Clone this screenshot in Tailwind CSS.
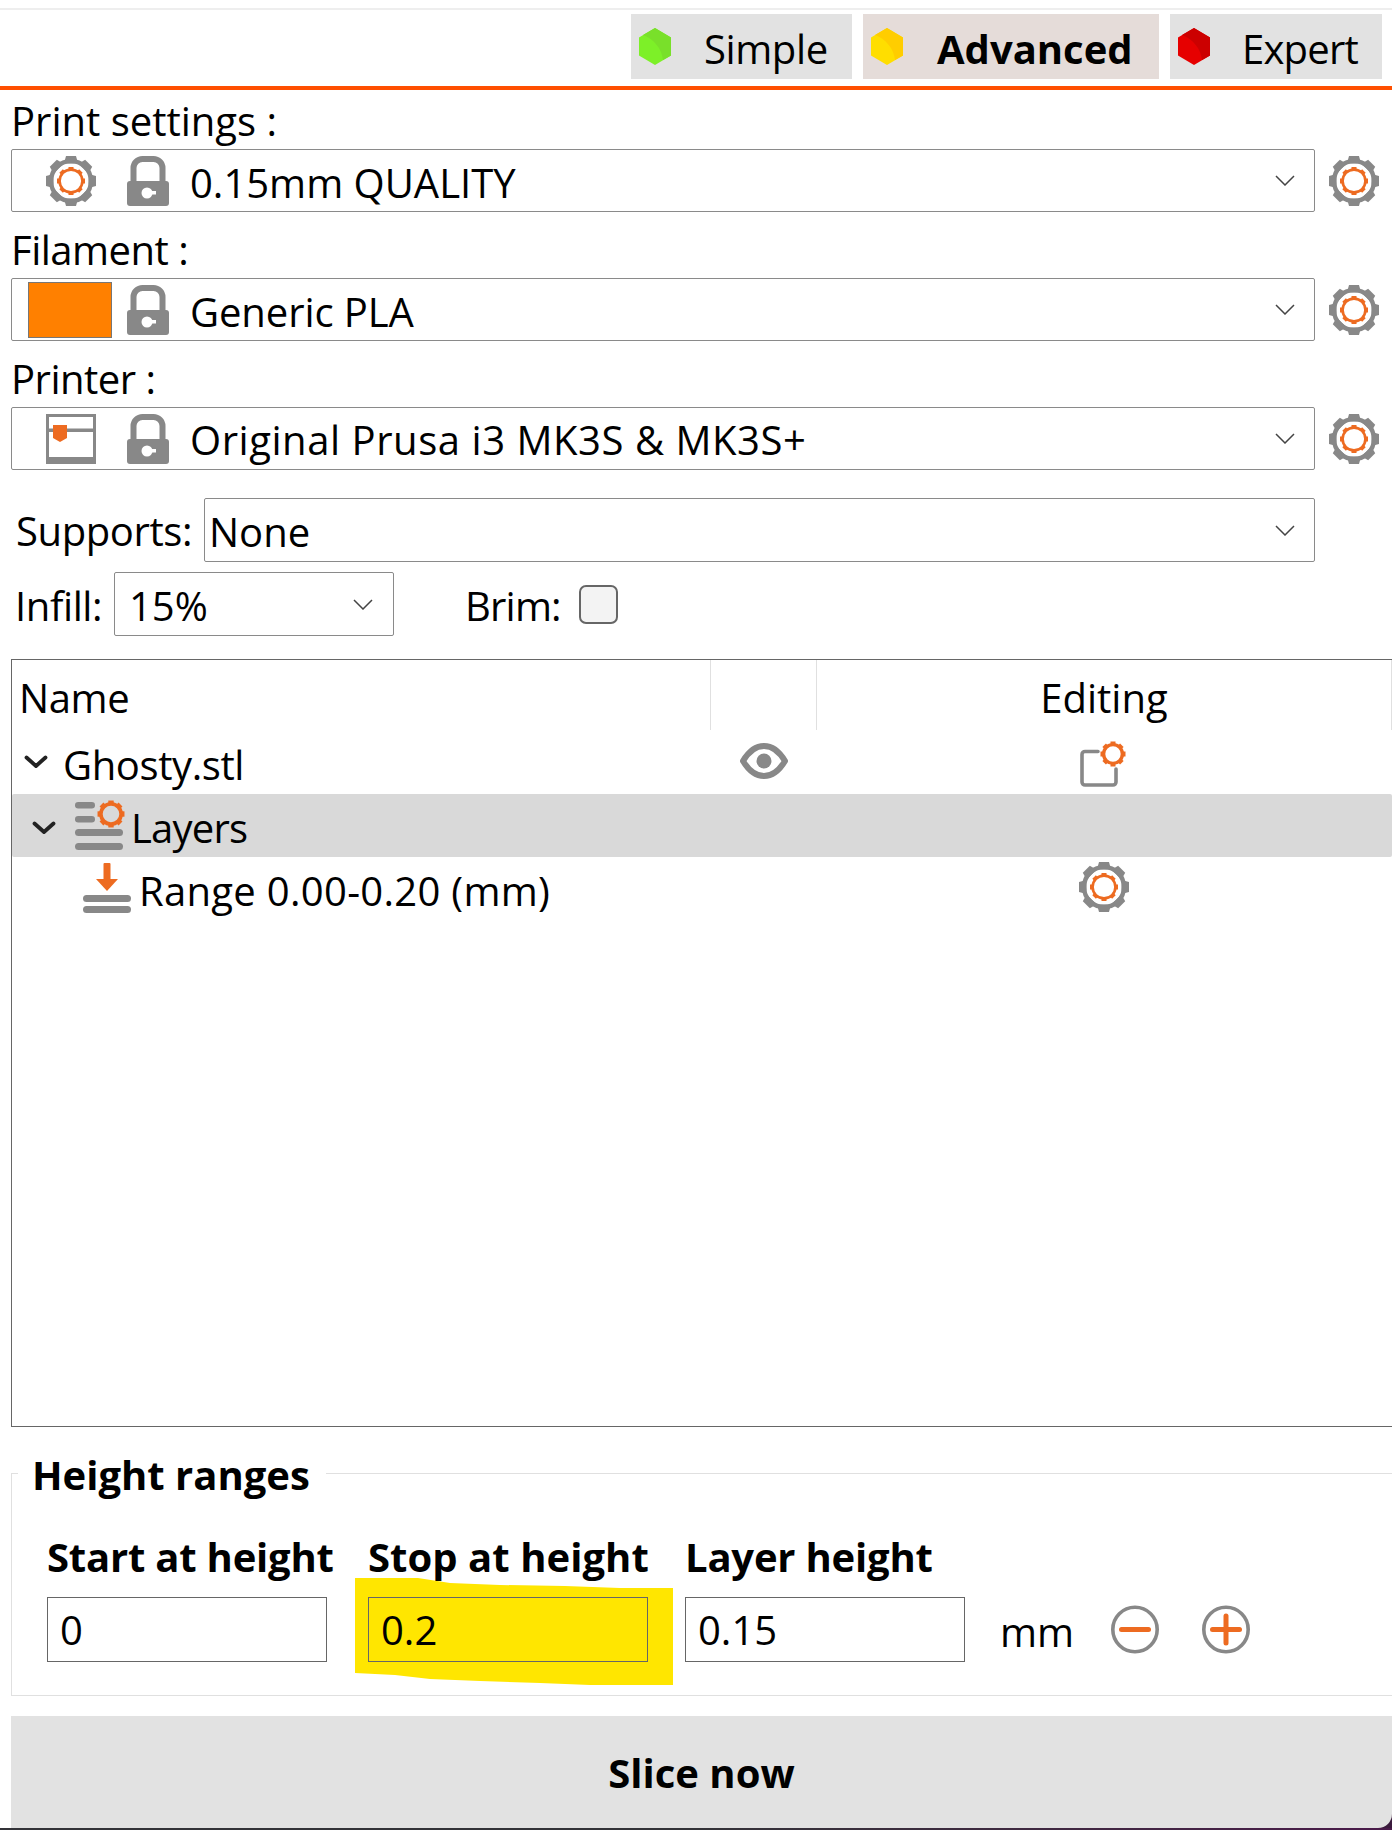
<!DOCTYPE html>
<html lang="en">
<head>
    <meta charset="UTF-8">
    <title>Height ranges</title>
    <script src="https://cdn.jsdelivr.net/npm/@tailwindcss/browser@4"></script>
</head>
<body class="bg-white">
    <!-- Shared icons -->
    <svg width="0" height="0" class="absolute">
        <defs>
            <symbol id="orange-gear" viewBox="0 0 50 50">
                <circle cx="25" cy="25" r="11.4" fill="none" stroke="#ED6B21" stroke-width="2.6"/>
                <g fill="#ED6B21">
                    <rect x="22.5" y="11" width="5" height="2.5"/>
                    <rect x="22.5" y="11" width="5" height="2.5" transform="rotate(45 25 25)"/>
                    <rect x="22.5" y="11" width="5" height="2.5" transform="rotate(90 25 25)"/>
                    <rect x="22.5" y="11" width="5" height="2.5" transform="rotate(135 25 25)"/>
                    <rect x="22.5" y="11" width="5" height="2.5" transform="rotate(180 25 25)"/>
                    <rect x="22.5" y="11" width="5" height="2.5" transform="rotate(225 25 25)"/>
                    <rect x="22.5" y="11" width="5" height="2.5" transform="rotate(270 25 25)"/>
                    <rect x="22.5" y="11" width="5" height="2.5" transform="rotate(315 25 25)"/>
                </g>
            </symbol>
            <symbol id="small-gear" viewBox="0 0 26 26">
                <circle cx="13" cy="13" r="9.4" fill="none" stroke="#ED6B21" stroke-width="3.4"/>
                <g fill="#ED6B21">
                    <rect x="10.5" y="0.5" width="5" height="3"/>
                    <rect x="10.5" y="0.5" width="5" height="3" transform="rotate(45 13 13)"/>
                    <rect x="10.5" y="0.5" width="5" height="3" transform="rotate(90 13 13)"/>
                    <rect x="10.5" y="0.5" width="5" height="3" transform="rotate(135 13 13)"/>
                    <rect x="10.5" y="0.5" width="5" height="3" transform="rotate(180 13 13)"/>
                    <rect x="10.5" y="0.5" width="5" height="3" transform="rotate(225 13 13)"/>
                    <rect x="10.5" y="0.5" width="5" height="3" transform="rotate(270 13 13)"/>
                    <rect x="10.5" y="0.5" width="5" height="3" transform="rotate(315 13 13)"/>
                </g>
            </symbol>
            <symbol id="gear" viewBox="0 0 50 50">
                <circle cx="25" cy="25" r="20" fill="none" stroke="#888888" stroke-width="4.4"/>
                <g fill="#888888">
                    <path d="M20 0h10l2 7.5h-14z"/>
                    <path d="M20 0h10l2 7.5h-14z" transform="rotate(45 25 25)"/>
                    <path d="M20 0h10l2 7.5h-14z" transform="rotate(90 25 25)"/>
                    <path d="M20 0h10l2 7.5h-14z" transform="rotate(135 25 25)"/>
                    <path d="M20 0h10l2 7.5h-14z" transform="rotate(180 25 25)"/>
                    <path d="M20 0h10l2 7.5h-14z" transform="rotate(225 25 25)"/>
                    <path d="M20 0h10l2 7.5h-14z" transform="rotate(270 25 25)"/>
                    <path d="M20 0h10l2 7.5h-14z" transform="rotate(315 25 25)"/>
                </g>
                <use href="#orange-gear" width="50" height="50"/>
            </symbol>
            <symbol id="lock" viewBox="0 0 42 50">
                <path d="M6.5 28V12a9 9 0 0 1 9-9h11a9 9 0 0 1 9 9v16" fill="none" stroke="#888888" stroke-width="6"/>
                <rect x="0" y="25" width="42" height="25" rx="3" fill="#888888"/>
                <circle cx="20" cy="37" r="5.5" fill="#fff"/>
                <rect x="23" y="35" width="6" height="3.5" fill="#fff"/>
            </symbol>
            <symbol id="chevron" viewBox="0 0 20 11">
                <path d="M1 1l9 9 9-9" fill="none" stroke="#444" stroke-width="1.5"/>
            </symbol>
            <symbol id="tree-chevron" viewBox="0 0 24 14">
                <path d="M2.5 2.5L12 11l9.5-8.5" fill="none" stroke="#222" stroke-width="3.8" stroke-linecap="round" stroke-linejoin="round"/>
            </symbol>
        </defs>
    </svg>

    <div class="relative w-[1392px] h-[1830px] overflow-hidden font-['Open_Sans',sans-serif] text-[40px] text-black">
        <!-- Top strip -->
        <div class="h-2"></div>
        <div class="h-[2px] bg-[#eeeeee]"></div>

        <!-- Mode buttons -->
        <div class="flex justify-end gap-[11px] pr-[10px] pt-1 h-[76px]">
            <div class="flex items-center w-[221px] h-[65px] pl-2 bg-[#e2e2e2]">
                <svg width="32" height="37" viewBox="0 0 32 37" class="shrink-0">
                    <path d="M16 0L32 9.5V27.5L16 37L0 27.5V9.5z" fill="#7DF028"/>
                    <path d="M16 0L32 9.5V27.5L24 32C23 21 15 11 4 7z" fill="#79E02A"/>
                </svg>
                <span class="ml-[33px] pt-1 tracking-[-0.4px]">Simple</span>
            </div>
            <div class="flex items-center w-[296px] h-[65px] pl-2 bg-[#e5dcd9]">
                <svg width="32" height="37" viewBox="0 0 32 37" class="shrink-0">
                    <path d="M16 0L32 9.5V27.5L16 37L0 27.5V9.5z" fill="#FFDE00"/>
                    <path d="M16 0L32 9.5V27.5L24 32C23 21 15 11 4 7z" fill="#FFCD00"/>
                </svg>
                <span class="ml-[34px] pt-1 font-bold">Advanced</span>
            </div>
            <div class="flex items-center w-[212px] h-[65px] pl-2 bg-[#e2e2e2]">
                <svg width="32" height="37" viewBox="0 0 32 37" class="shrink-0">
                    <path d="M16 0L32 9.5V27.5L16 37L0 27.5V9.5z" fill="#E60000"/>
                    <path d="M16 0L32 9.5V27.5L24 32C23 21 15 11 4 7z" fill="#CC0000"/>
                </svg>
                <span class="ml-[32px] pt-1 tracking-[-0.8px]">Expert</span>
            </div>
        </div>
        <div class="h-1 bg-[#FF4F00]"></div>

        <!-- Presets -->
        <div class="pl-[11px]">
            <div class="flex items-center h-[59px] pt-[2px]">Print settings :</div>
            <div class="flex items-center gap-[14px]">
                <div class="flex items-center w-[1304px] h-[63px] border border-[#8a8a8a] rounded-[2px]">
                    <svg width="50" height="50" class="ml-[34px] shrink-0"><use href="#gear"/></svg>
                    <svg width="42" height="50" class="ml-[31px] shrink-0"><use href="#lock"/></svg>
                    <span class="ml-[21px] pt-[5px]">0.15mm QUALITY</span>
                    <svg width="20" height="11" class="ml-auto mr-[19px] shrink-0"><use href="#chevron"/></svg>
                </div>
                <svg width="50" height="50" class="shrink-0"><use href="#gear"/></svg>
            </div>

            <div class="flex items-center h-[66px] pt-[10px] tracking-[-0.5px]">Filament :</div>
            <div class="flex items-center gap-[14px]">
                <div class="flex items-center w-[1304px] h-[63px] border border-[#8a8a8a] rounded-[2px]">
                    <div class="ml-[16px] w-[84px] h-[56px] shrink-0 bg-[#FF8000] border border-[#777777]"></div>
                    <svg width="42" height="50" class="ml-[15px] shrink-0"><use href="#lock"/></svg>
                    <span class="ml-[21px] pt-[5px] tracking-[-0.1px]">Generic PLA</span>
                    <svg width="20" height="11" class="ml-auto mr-[19px] shrink-0"><use href="#chevron"/></svg>
                </div>
                <svg width="50" height="50" class="shrink-0"><use href="#gear"/></svg>
            </div>

            <div class="flex items-center h-[66px] pt-[9px] tracking-[-0.5px]">Printer :</div>
            <div class="flex items-center gap-[14px]">
                <div class="flex items-center w-[1304px] h-[63px] border border-[#8a8a8a] rounded-[2px]">
                    <svg width="50" height="50" viewBox="0 0 50 50" class="ml-[34px] shrink-0">
                        <rect x="1.5" y="1.5" width="47" height="47" fill="none" stroke="#888888" stroke-width="3"/>
                        <rect x="0" y="43" width="50" height="7" fill="#888888"/>
                        <rect x="0" y="14.5" width="50" height="3.5" fill="#888888"/>
                        <path d="M7 11H21V24L14 28L7 24z" fill="#ED6B21"/>
                    </svg>
                    <svg width="42" height="50" class="ml-[31px] shrink-0"><use href="#lock"/></svg>
                    <span class="ml-[21px] pt-[3px] tracking-[0.55px]">Original Prusa i3 MK3S &amp; MK3S+</span>
                    <svg width="20" height="11" class="ml-auto mr-[19px] shrink-0"><use href="#chevron"/></svg>
                </div>
                <svg width="50" height="50" class="shrink-0"><use href="#gear"/></svg>
            </div>

            <!-- Frequently changed -->
            <div class="flex items-center h-[64px] mt-[28px]">
                <div class="w-[193px] pl-[5px] pt-[2px] tracking-[-0.4px]">Supports:</div>
                <div class="flex items-center w-[1111px] h-[64px] border border-[#8a8a8a] rounded-[2px]">
                    <span class="ml-[4px] pt-[3px]">None</span>
                    <svg width="20" height="11" class="ml-auto mr-[19px] shrink-0"><use href="#chevron"/></svg>
                </div>
            </div>
            <div class="flex items-center h-[64px] mt-[10px]">
                <div class="w-[103px] pl-1 pt-1 tracking-[-0.4px]">Infill:</div>
                <div class="flex items-center w-[280px] h-[64px] border border-[#8a8a8a] rounded-[2px]">
                    <span class="ml-[14px] pt-1">15%</span>
                    <svg width="20" height="11" class="ml-auto mr-[20px] shrink-0"><use href="#chevron"/></svg>
                </div>
                <div class="w-[114px] ml-[71px] pt-1 tracking-[-0.8px]">Brim:</div>
                <div class="w-[39px] h-[39px] bg-[#f3f3f3] border-2 border-[#666666] rounded-[7px]"></div>
            </div>

            <!-- Object list -->
            <div class="mt-[23px] h-[768px] border-l border-t border-b border-[#666666]">
                <div class="flex h-[70px]">
                    <div class="flex items-center w-[699px] pl-[7px] pt-[6px] tracking-[-0.4px] border-r border-[#e0e0e0]">Name</div>
                    <div class="w-[106px] border-r border-[#e0e0e0]"></div>
                    <div class="flex flex-1 items-center justify-center pt-[6px] border-r border-[#e0e0e0]">Editing</div>
                </div>
                <div class="flex items-center h-[64px]">
                    <div class="flex items-center w-[699px] pl-[12px]">
                        <svg width="24" height="14" class="shrink-0"><use href="#tree-chevron"/></svg>
                        <span class="ml-[15px] pt-[5px] tracking-[-0.4px]">Ghosty.stl</span>
                    </div>
                    <div class="flex justify-center w-[106px]">
                        <svg width="48" height="36" viewBox="0 0 48 36" class="-mt-[2px]">
                            <path d="M3 18C9 8 16 3 24 3s15 5 21 15c-6 10-13 15-21 15S9 28 3 18z" fill="none" stroke="#888888" stroke-width="6" stroke-linejoin="round"/>
                            <circle cx="24" cy="18" r="7.5" fill="#888888"/>
                        </svg>
                    </div>
                    <div class="flex flex-1 justify-center">
                        <svg width="46" height="46" viewBox="0 0 46 46" class="mt-[3px] -ml-1">
                            <path d="M18 10.5H5a3 3 0 0 0-3 3V41a3 3 0 0 0 3 3h28a3 3 0 0 0 3-3V28" fill="none" stroke="#888888" stroke-width="3.6" stroke-linecap="round"/>
                            <use href="#small-gear" x="20" y="0" width="26" height="26"/>
                        </svg>
                    </div>
                </div>
                <div class="flex items-center h-[63px] bg-[#d9d9d9] rounded-[2px]">
                    <svg width="24" height="14" class="ml-[20px] mt-1 shrink-0"><use href="#tree-chevron"/></svg>
                    <svg width="50" height="50" viewBox="0 0 50 50" class="ml-[19px] shrink-0 overflow-visible">
                        <g fill="#888888">
                            <rect x="0" y="1" width="20" height="6.5" rx="3.2"/>
                            <rect x="0" y="15" width="20" height="6.5" rx="3.2"/>
                            <rect x="0" y="28" width="48" height="7" rx="3.5"/>
                            <rect x="0" y="42" width="48" height="7" rx="3.5"/>
                        </g>
                        <use href="#small-gear" x="22" y="-1" width="28" height="28"/>
                    </svg>
                    <span class="ml-[6px] pt-[4px] tracking-[-0.8px]">Layers</span>
                </div>
                <div class="flex items-center h-[63px]">
                    <div class="flex items-center w-[805px] pl-[71px]">
                        <svg width="48" height="50" viewBox="0 0 48 50" class="-mt-[2px] shrink-0">
                            <rect x="20.5" y="0" width="7" height="18" rx="1" fill="#ED6B21"/>
                            <path d="M13 16H35L24 28z" fill="#ED6B21"/>
                            <rect x="0" y="32" width="48" height="7" rx="3.5" fill="#888888"/>
                            <rect x="0" y="43" width="48" height="7" rx="3.5" fill="#888888"/>
                        </svg>
                        <span class="ml-[8px] pt-[4px] tracking-[0.3px]">Range 0.00-0.20 (mm)</span>
                    </div>
                    <div class="flex flex-1 justify-center">
                        <svg width="50" height="50" class="-ml-[1px] -mt-1"><use href="#gear"/></svg>
                    </div>
                </div>
            </div>

            <!-- Height ranges -->
            <div class="relative mt-[46px] h-[223px] border-l border-t border-b border-[#e0e0e0]">
                <div class="absolute -top-[19px] left-[6px] h-[40px] flex items-center pl-[14px] pr-[16px] bg-white font-bold">Height ranges</div>
                <!-- yellow marker drawn over the screenshot -->
                <svg width="320" height="110" viewBox="0 0 320 110" class="absolute top-[104px] left-[343px]">
                    <path d="M0 0H63L95 5L145 7L210 8L265 10H318V107H235L185 105L125 103L75 101L40 97L0 95z" fill="#FFE600"/>
                </svg>
                <div class="relative flex items-end pl-[35px] pt-[63px]">
                    <div class="w-[280px]">
                        <div class="flex items-center h-[40px] mb-[20px] font-bold whitespace-nowrap tracking-[-0.2px]">Start at height</div>
                        <div class="flex items-center h-[65px] pl-[12px] border border-[#666666]">0</div>
                    </div>
                    <div class="w-[280px] ml-[41px]">
                        <div class="flex items-center h-[40px] mb-[20px] font-bold whitespace-nowrap tracking-[0.05px]">Stop at height</div>
                        <div class="flex items-center h-[65px] pl-[12px] border border-[#666666]">0.2</div>
                    </div>
                    <div class="w-[280px] ml-[37px]">
                        <div class="flex items-center h-[40px] mb-[20px] font-bold whitespace-nowrap tracking-[-0.2px]">Layer height</div>
                        <div class="flex items-center h-[65px] pl-[12px] border border-[#666666]">0.15</div>
                    </div>
                    <div class="flex items-center h-[65px] ml-[35px]">
                        <span class="w-[111px] pt-[4px]">mm</span>
                        <svg width="48" height="49" viewBox="0 0 48 49" class="shrink-0">
                            <circle cx="24" cy="24.5" r="22.2" fill="none" stroke="#888888" stroke-width="3.6"/>
                            <rect x="8" y="22" width="32" height="5" rx="2.5" fill="#ED6B21"/>
                        </svg>
                        <svg width="48" height="49" viewBox="0 0 48 49" class="ml-[43px] shrink-0">
                            <circle cx="24" cy="24.5" r="22.2" fill="none" stroke="#888888" stroke-width="3.6"/>
                            <rect x="8" y="22" width="32" height="5" rx="2.5" fill="#ED6B21"/>
                            <rect x="21.5" y="8.5" width="5" height="32" rx="2.5" fill="#ED6B21"/>
                        </svg>
                    </div>
                </div>
            </div>
        </div>

        <!-- Slice button -->
        <div class="ml-[11px] mt-[20px] bg-[#3b1b3d]">
            <div class="flex items-center justify-center h-[112px] pt-[2px] bg-[#e2e2e2] rounded-br-[14px] font-bold">Slice now</div>
        </div>
        <div class="h-[2px] bg-linear-to-r from-[#333338] via-[#333338] to-[#4a1a4a]"></div>
    </div>
</body>
</html>
